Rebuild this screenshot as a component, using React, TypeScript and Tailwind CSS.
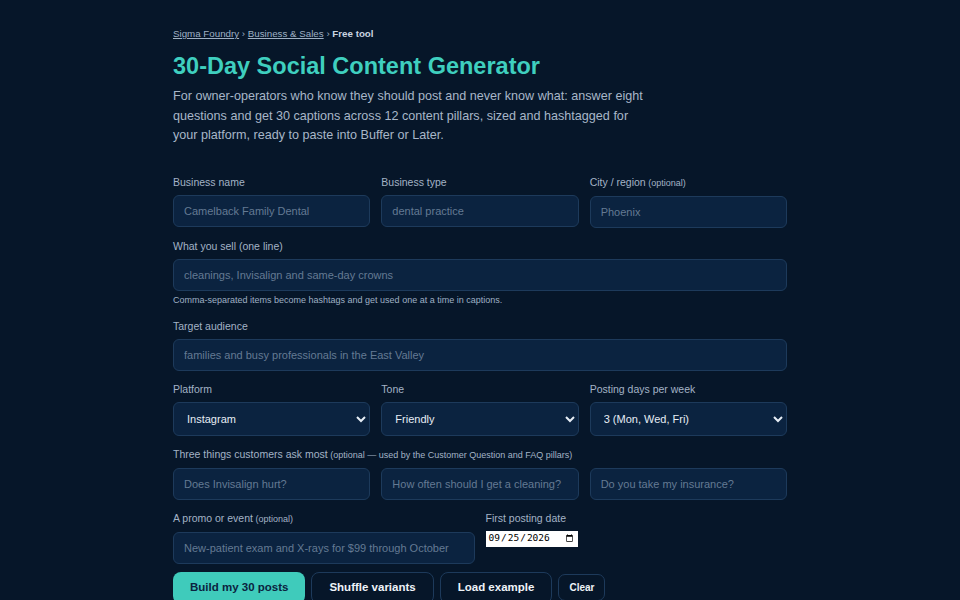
import React, { useState } from "react";

const Label = ({ children, note }: { children: React.ReactNode; note?: string }) => (
  <label className="block text-[10.5px] leading-[16px] mb-[5px] text-[#a3b3c6]">
    {children}
    {note ? <span className="text-[9px]"> ({note})</span> : null}
  </label>
);

const inputCls =
  "w-full h-[32px] rounded-[6px] border border-[#1d3a5b] bg-[#0b2340] px-[10px] text-[11px] text-[#e6edf5] placeholder:text-[#647a93] outline-none";
const selectCls =
  "w-full h-[34px] rounded-[6px] border border-[#1d3a5b] bg-[#0b2340] pl-[9px] pr-[6px] text-[11px] text-[#e6edf5] outline-none";

const Field = ({ label, note, placeholder }: { label: string; note?: string; placeholder: string }) => (
  <div>
    <Label note={note}>{label}</Label>
    <input className={inputCls} placeholder={placeholder} />
  </div>
);

export default function App() {
  const [platform, setPlatform] = useState("instagram");
  const [tone, setTone] = useState("friendly");
  const [days, setDays] = useState("3");
  const [date, setDate] = useState("2026-09-25");

  return (
    <div className="min-h-screen bg-[#061629] font-['Liberation_Sans',Arial,sans-serif]">
      <div className="w-[614px] mx-auto pt-[26px]">
        <nav className="text-[9.75px] leading-[16px] text-[#9fb0c4]">
          <a href="#" className="underline">Sigma Foundry</a>
          <span> › </span>
          <a href="#" className="underline">Business &amp; Sales</a>
          <span> › </span>
          <span className="font-bold text-[#c9d4e0]">Free tool</span>
        </nav>
        <h1 className="mt-[9px] text-[23.5px] leading-[30px] font-bold text-[#3fcfbf]">
          30-Day Social Content Generator
        </h1>
        <p className="mt-[6px] max-w-[480px] text-[12.6px] leading-[19.5px] text-[#a8b6c8]">
          For owner-operators who know they should post and never know what: answer eight
          questions and get 30 captions across 12 content pillars, sized and hashtagged for
          your platform, ready to paste into Buffer or Later.
        </p>

        <form className="mt-[28px] flex flex-col gap-[10px]" onSubmit={(e) => e.preventDefault()}>
          <div className="grid grid-cols-3 gap-[11px]">
            <Field label="Business name" placeholder="Camelback Family Dental" />
            <Field label="Business type" placeholder="dental practice" />
            <Field label="City / region" note="optional" placeholder="Phoenix" />
          </div>

          <div>
            <Label>What you sell (one line)</Label>
            <input className={inputCls} placeholder="cleanings, Invisalign and same-day crowns" />
            <p className="mt-[3px] mb-[2px] text-[9px] leading-[12px] text-[#9fb0c4]">
              Comma-separated items become hashtags and get used one at a time in captions.
            </p>
          </div>

          <Field label="Target audience" placeholder="families and busy professionals in the East Valley" />

          <div className="grid grid-cols-3 gap-[11px]">
            <div>
              <Label>Platform</Label>
              <select className={selectCls} value={platform} onChange={(e) => setPlatform(e.target.value)}>
                <option value="instagram">Instagram</option>
                <option value="facebook">Facebook</option>
                <option value="linkedin">LinkedIn</option>
              </select>
            </div>
            <div>
              <Label>Tone</Label>
              <select className={selectCls} value={tone} onChange={(e) => setTone(e.target.value)}>
                <option value="friendly">Friendly</option>
                <option value="professional">Professional</option>
              </select>
            </div>
            <div>
              <Label>Posting days per week</Label>
              <select className={selectCls} value={days} onChange={(e) => setDays(e.target.value)}>
                <option value="3">3 (Mon, Wed, Fri)</option>
                <option value="5">5 (Mon–Fri)</option>
              </select>
            </div>
          </div>

          <div>
            <Label note="optional — used by the Customer Question and FAQ pillars">
              Three things customers ask most
            </Label>
            <div className="grid grid-cols-3 gap-[11px]">
              <input className={inputCls} placeholder="Does Invisalign hurt?" />
              <input className={inputCls} placeholder="How often should I get a cleaning?" />
              <input className={inputCls} placeholder="Do you take my insurance?" />
            </div>
          </div>

          <div className="grid grid-cols-2 gap-[11px]">
            <Field label="A promo or event" note="optional" placeholder="New-patient exam and X-rays for $99 through October" />
            <div>
              <Label>First posting date</Label>
              <input
                type="date"
                value={date}
                onChange={(e) => setDate(e.target.value)}
                className="block mt-[2px] h-[16px] bg-white text-black px-[2px] font-['DejaVu_Sans_Mono',monospace] text-[9.5px] [color-scheme:light]"
              />
            </div>
          </div>

          <div className="flex items-center gap-[6px] mt-[-2px]">
            <button className="h-[32px] px-[17px] rounded-[8px] bg-[#3fcbbb] text-[#0b2340] text-[11.5px] font-bold">
              Build my 30 posts
            </button>
            <button className="h-[32px] px-[17px] rounded-[8px] border border-[#1d3a5b] text-[#eef3f8] text-[11.5px] font-bold">
              Shuffle variants
            </button>
            <button className="h-[32px] px-[17px] rounded-[8px] border border-[#1d3a5b] text-[#eef3f8] text-[11.5px] font-bold">
              Load example
            </button>
            <button className="h-[27px] px-[10px] rounded-[7px] border border-[#1d3a5b] text-[#eef3f8] text-[10px] font-bold">
              Clear
            </button>
          </div>
        </form>
      </div>
    </div>
  );
}
